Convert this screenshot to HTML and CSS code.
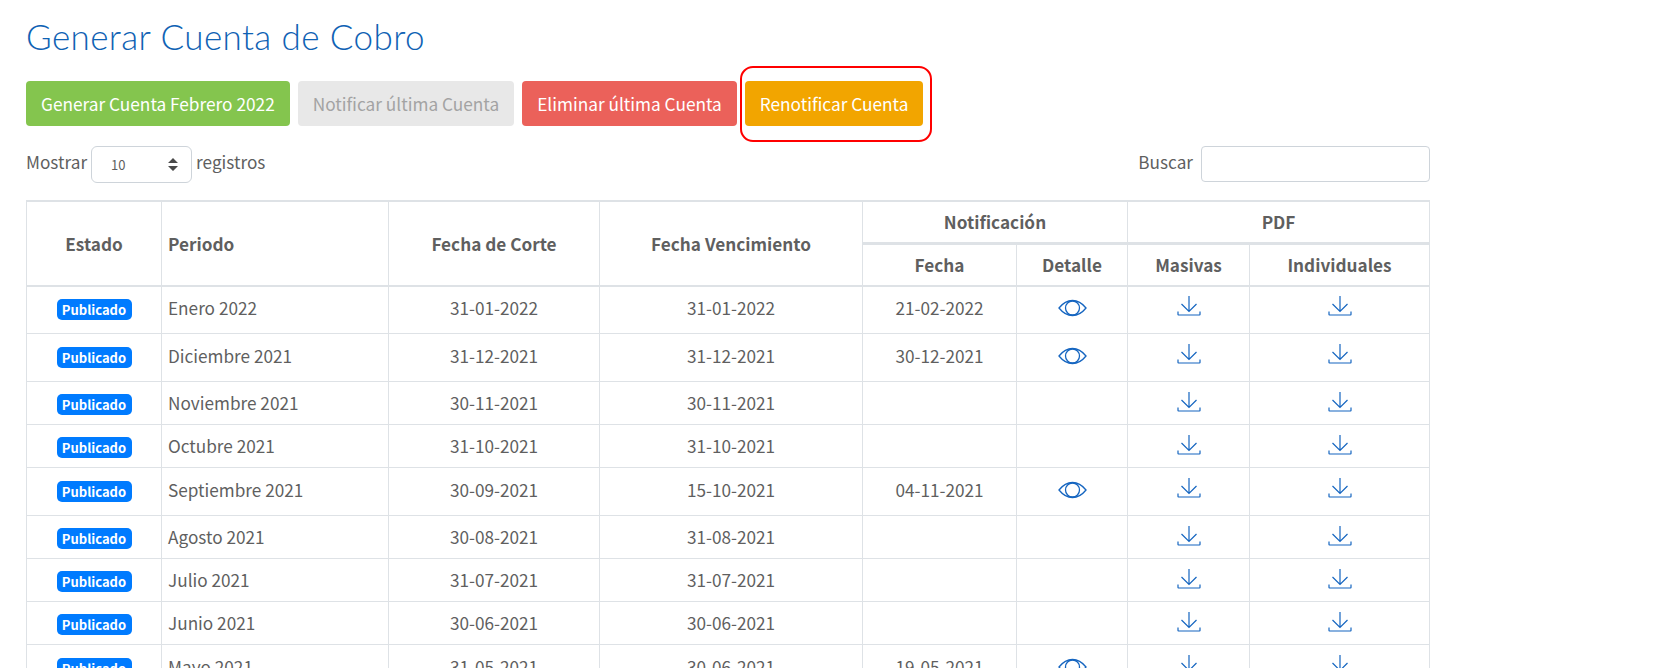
FILE: index.html
```html
<!DOCTYPE html>
<html>
<head>
    <title>Generar Cuenta de Cobro</title>
    <link rel="stylesheet" href="styles.css">
</head>
<body>
    <svg class="icon-defs" width="0" height="0">
        <symbol id="eye" viewBox="0 0 29 18">
            <path d="M1 9C5 4 9.500 1.500 14.500 1.500S24 4 28 9C24 14 19.500 16.500 14.500 16.500S5 14 1 9Z" fill="none" stroke="currentColor" stroke-width="1.300"/>
            <circle cx="14.500" cy="9" r="7" fill="none" stroke="currentColor" stroke-width="1.300"/>
        </symbol>
        <symbol id="download" viewBox="0 0 24 21">
            <path d="M12 1V16.500M4.500 9L12 16.500L19.500 9M1 16.500V19.500C1 19.800 1.200 20 1.500 20H22.500C22.800 20 23 19.800 23 19.500V16.500" fill="none" stroke="currentColor" stroke-width="1.200"/>
        </symbol>
    </svg>

    <h1 class="page-title">Generar Cuenta de Cobro</h1>

    <div class="actions">
        <button class="btn btn-green">Generar Cuenta Febrero 2022</button>
        <button class="btn btn-gray">Notificar última Cuenta</button>
        <button class="btn btn-red">Eliminar última Cuenta</button>
        <span class="highlight">
            <button class="btn btn-orange">Renotificar Cuenta</button>
            <span class="highlight-ring"></span>
        </span>
    </div>

    <div class="table-tools">
        <div class="length">
            <span class="tool-label">Mostrar</span>
            <span class="select"><span>10</span>
                <svg class="select-arrows" width="10" height="13" viewBox="0 0 10 13"><path d="M5 0L10 5H0ZM5 13L0 8H10Z" fill="currentColor"/></svg>
            </span>
            <span class="tool-label">registros</span>
        </div>
        <div class="search">
            <label class="tool-label" for="buscar">Buscar</label>
            <input type="text" id="buscar">
        </div>
    </div>

    <table class="accounts">
        <colgroup>
            <col class="col-estado">
            <col class="col-periodo">
            <col class="col-corte">
            <col class="col-venc">
            <col class="col-fecha">
            <col class="col-detalle">
            <col class="col-masivas">
            <col class="col-indiv">
        </colgroup>
        <thead>
            <tr class="head-top">
                <th rowspan="2">Estado</th>
                <th rowspan="2" class="left">Periodo</th>
                <th rowspan="2">Fecha de Corte</th>
                <th rowspan="2">Fecha Vencimiento</th>
                <th colspan="2">Notificación</th>
                <th colspan="2">PDF</th>
            </tr>
            <tr>
                <th>Fecha</th>
                <th>Detalle</th>
                <th>Masivas</th>
                <th>Individuales</th>
            </tr>
        </thead>
        <tbody>
            <tr class="notified">
                <td><span class="badge">Publicado</span></td>
                <td class="left">Enero 2022</td>
                <td>31-01-2022</td>
                <td>31-01-2022</td>
                <td>21-02-2022</td>
                <td><svg class="eye"><use href="#eye"/></svg></td>
                <td><svg class="download"><use href="#download"/></svg></td>
                <td><svg class="download"><use href="#download"/></svg></td>
            </tr>
            <tr class="notified">
                <td><span class="badge">Publicado</span></td>
                <td class="left">Diciembre 2021</td>
                <td>31-12-2021</td>
                <td>31-12-2021</td>
                <td>30-12-2021</td>
                <td><svg class="eye"><use href="#eye"/></svg></td>
                <td><svg class="download"><use href="#download"/></svg></td>
                <td><svg class="download"><use href="#download"/></svg></td>
            </tr>
            <tr>
                <td><span class="badge">Publicado</span></td>
                <td class="left">Noviembre 2021</td>
                <td>30-11-2021</td>
                <td>30-11-2021</td>
                <td></td>
                <td></td>
                <td><svg class="download"><use href="#download"/></svg></td>
                <td><svg class="download"><use href="#download"/></svg></td>
            </tr>
            <tr>
                <td><span class="badge">Publicado</span></td>
                <td class="left">Octubre 2021</td>
                <td>31-10-2021</td>
                <td>31-10-2021</td>
                <td></td>
                <td></td>
                <td><svg class="download"><use href="#download"/></svg></td>
                <td><svg class="download"><use href="#download"/></svg></td>
            </tr>
            <tr class="notified">
                <td><span class="badge">Publicado</span></td>
                <td class="left">Septiembre 2021</td>
                <td>30-09-2021</td>
                <td>15-10-2021</td>
                <td>04-11-2021</td>
                <td><svg class="eye"><use href="#eye"/></svg></td>
                <td><svg class="download"><use href="#download"/></svg></td>
                <td><svg class="download"><use href="#download"/></svg></td>
            </tr>
            <tr>
                <td><span class="badge">Publicado</span></td>
                <td class="left">Agosto 2021</td>
                <td>30-08-2021</td>
                <td>31-08-2021</td>
                <td></td>
                <td></td>
                <td><svg class="download"><use href="#download"/></svg></td>
                <td><svg class="download"><use href="#download"/></svg></td>
            </tr>
            <tr>
                <td><span class="badge">Publicado</span></td>
                <td class="left">Julio 2021</td>
                <td>31-07-2021</td>
                <td>31-07-2021</td>
                <td></td>
                <td></td>
                <td><svg class="download"><use href="#download"/></svg></td>
                <td><svg class="download"><use href="#download"/></svg></td>
            </tr>
            <tr>
                <td><span class="badge">Publicado</span></td>
                <td class="left">Junio 2021</td>
                <td>30-06-2021</td>
                <td>30-06-2021</td>
                <td></td>
                <td></td>
                <td><svg class="download"><use href="#download"/></svg></td>
                <td><svg class="download"><use href="#download"/></svg></td>
            </tr>
            <tr class="notified">
                <td><span class="badge">Publicado</span></td>
                <td class="left">Mayo 2021</td>
                <td>31-05-2021</td>
                <td>30-06-2021</td>
                <td>19-05-2021</td>
                <td><svg class="eye"><use href="#eye"/></svg></td>
                <td><svg class="download"><use href="#download"/></svg></td>
                <td><svg class="download"><use href="#download"/></svg></td>
            </tr>
        </tbody>
    </table>
</body>
</html>
```
FILE: styles.css
```css
html, body {
    height: 100%;
    overflow: hidden;
}
body {
    margin: 0;
    padding: 0 0 0 26px;
    background: #fff;
    color: #5f5f5f;
    font-family: "Noto Sans CJK JP", "Open Sans", sans-serif;
    font-size: 17.2px;
    line-height: 24px;
}
.icon-defs {
    position: absolute;
}
.page-title {
    margin: 0;
    padding-top: 15px;
    height: 65px;
    box-sizing: border-box;
    font-family: Lato, sans-serif;
    font-size: 35px;
    font-weight: 300;
    letter-spacing: 0.4px;
    line-height: 42px;
    color: #0f62b4;
}
.actions {
    display: flex;
    gap: 8px;
    margin-top: 16px;
    height: 45px;
}
.btn {
    height: 45px;
    padding: 0 15px;
    border: none;
    border-radius: 4px;
    font: inherit;
    font-size: 17.25px;
    color: #fff;
    white-space: nowrap;
}
.btn-green { background: #84c54e; }
.btn-gray { background: #e8e8e8; color: #a3a3a3; }
.btn-red { background: #eb615a; }
.btn-orange { background: #f2a500; }
.highlight {
    position: relative;
    display: block;
}
.highlight-ring {
    position: absolute;
    top: -15px;
    left: -5px;
    right: -9px;
    bottom: -16px;
    border: 2px solid #f00;
    border-radius: 13px;
}
.table-tools {
    display: flex;
    justify-content: space-between;
    align-items: flex-start;
    width: 1404px;
    margin-top: 20px;
    height: 54px;
}
.length, .search {
    display: flex;
    align-items: center;
    gap: 4px;
}
.search {
    gap: 8px;
}
.tool-label {
    padding-bottom: 5px;
}
.select {
    display: flex;
    align-items: center;
    justify-content: space-between;
    box-sizing: border-box;
    width: 101px;
    height: 37px;
    padding: 0 13px 0 19px;
    border: 1px solid #ced4da;
    border-radius: 6px;
    font-size: 13px;
}
.select-arrows {
    color: #4a4a4a;
}
.search input {
    box-sizing: border-box;
    width: 229px;
    height: 36px;
    border: 1px solid #ced4da;
    border-radius: 4px;
}
.accounts {
    width: 1403px;
    table-layout: fixed;
    border-collapse: collapse;
    text-align: center;
}
.col-estado { width: 135px; }
.col-periodo { width: 227px; }
.col-corte { width: 211px; }
.col-venc { width: 263px; }
.col-fecha { width: 154px; }
.col-detalle { width: 111px; }
.col-masivas { width: 122px; }
.col-indiv { width: 180px; }
.accounts th, .accounts td {
    border: 1px solid #dee2e6;
    padding: 0 6px;
}
.accounts th {
    height: 40px;
    font-weight: 700;
    border-top-width: 2px;
    border-bottom-width: 2px;
}
.head-top th[colspan] {
    border-bottom-width: 3px;
}
.accounts td {
    height: 42px;
}
.accounts .notified td {
    padding-top: 1px;
    padding-bottom: 4px;
}
.accounts tbody tr:first-child td {
    padding-top: 0;
}
.accounts .left {
    text-align: left;
}
.badge {
    display: inline-block;
    width: 75px;
    height: 21px;
    border-radius: 5px;
    background: #007bff;
    color: #fff;
    font-size: 13px;
    font-weight: 700;
    line-height: 21px;
    vertical-align: middle;
}
.eye {
    display: block;
    width: 29px;
    height: 18px;
    margin: 0 auto;
    color: #1565c0;
}
.download {
    display: block;
    width: 24px;
    height: 21px;
    margin: 0 auto 3px;
    color: #1565c0;
}
.notified .download {
    margin-bottom: 5px;
}
```
